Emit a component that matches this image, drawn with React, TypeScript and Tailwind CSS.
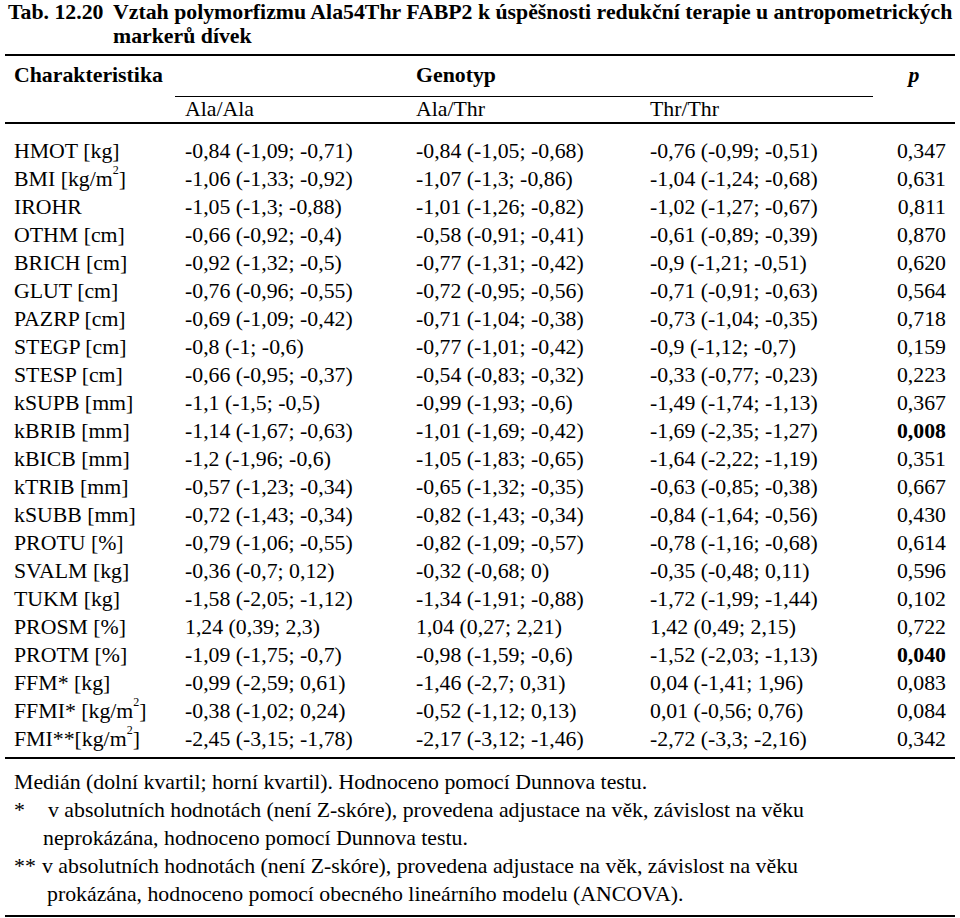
type Row = { label: React.ReactNode; a: string; b: string; c: string; p: string; bold?: boolean };

const Sq = () => <sup className="align-[6px] text-[12px] leading-none">2</sup>;

const rows: Row[] = [
  { label: "HMOT [kg]", a: "-0,84 (-1,09; -0,71)", b: "-0,84 (-1,05; -0,68)", c: "-0,76 (-0,99; -0,51)", p: "0,347" },
  { label: <>BMI [kg/m<Sq />]</>, a: "-1,06 (-1,33; -0,92)", b: "-1,07 (-1,3; -0,86)", c: "-1,04 (-1,24; -0,68)", p: "0,631" },
  { label: "IROHR", a: "-1,05 (-1,3; -0,88)", b: "-1,01 (-1,26; -0,82)", c: "-1,02 (-1,27; -0,67)", p: "0,811" },
  { label: "OTHM [cm]", a: "-0,66 (-0,92; -0,4)", b: "-0,58 (-0,91; -0,41)", c: "-0,61 (-0,89; -0,39)", p: "0,870" },
  { label: "BRICH [cm]", a: "-0,92 (-1,32; -0,5)", b: "-0,77 (-1,31; -0,42)", c: "-0,9 (-1,21; -0,51)", p: "0,620" },
  { label: "GLUT [cm]", a: "-0,76 (-0,96; -0,55)", b: "-0,72 (-0,95; -0,56)", c: "-0,71 (-0,91; -0,63)", p: "0,564" },
  { label: "PAZRP [cm]", a: "-0,69 (-1,09; -0,42)", b: "-0,71 (-1,04; -0,38)", c: "-0,73 (-1,04; -0,35)", p: "0,718" },
  { label: "STEGP [cm]", a: "-0,8 (-1; -0,6)", b: "-0,77 (-1,01; -0,42)", c: "-0,9 (-1,12; -0,7)", p: "0,159" },
  { label: "STESP [cm]", a: "-0,66 (-0,95; -0,37)", b: "-0,54 (-0,83; -0,32)", c: "-0,33 (-0,77; -0,23)", p: "0,223" },
  { label: "kSUPB [mm]", a: "-1,1 (-1,5; -0,5)", b: "-0,99 (-1,93; -0,6)", c: "-1,49 (-1,74; -1,13)", p: "0,367" },
  { label: "kBRIB [mm]", a: "-1,14 (-1,67; -0,63)", b: "-1,01 (-1,69; -0,42)", c: "-1,69 (-2,35; -1,27)", p: "0,008", bold: true },
  { label: "kBICB [mm]", a: "-1,2 (-1,96; -0,6)", b: "-1,05 (-1,83; -0,65)", c: "-1,64 (-2,22; -1,19)", p: "0,351" },
  { label: "kTRIB [mm]", a: "-0,57 (-1,23; -0,34)", b: "-0,65 (-1,32; -0,35)", c: "-0,63 (-0,85; -0,38)", p: "0,667" },
  { label: "kSUBB [mm]", a: "-0,72 (-1,43; -0,34)", b: "-0,82 (-1,43; -0,34)", c: "-0,84 (-1,64; -0,56)", p: "0,430" },
  { label: "PROTU [%]", a: "-0,79 (-1,06; -0,55)", b: "-0,82 (-1,09; -0,57)", c: "-0,78 (-1,16; -0,68)", p: "0,614" },
  { label: "SVALM [kg]", a: "-0,36 (-0,7; 0,12)", b: "-0,32 (-0,68; 0)", c: "-0,35 (-0,48; 0,11)", p: "0,596" },
  { label: "TUKM [kg]", a: "-1,58 (-2,05; -1,12)", b: "-1,34 (-1,91; -0,88)", c: "-1,72 (-1,99; -1,44)", p: "0,102" },
  { label: "PROSM [%]", a: "1,24 (0,39; 2,3)", b: "1,04 (0,27; 2,21)", c: "1,42 (0,49; 2,15)", p: "0,722" },
  { label: "PROTM [%]", a: "-1,09 (-1,75; -0,7)", b: "-0,98 (-1,59; -0,6)", c: "-1,52 (-2,03; -1,13)", p: "0,040", bold: true },
  { label: "FFM* [kg]", a: "-0,99 (-2,59; 0,61)", b: "-1,46 (-2,7; 0,31)", c: "0,04 (-1,41; 1,96)", p: "0,083" },
  { label: <>FFMI* [kg/m<Sq />]</>, a: "-0,38 (-1,02; 0,24)", b: "-0,52 (-1,12; 0,13)", c: "0,01 (-0,56; 0,76)", p: "0,084" },
  { label: <>FMI**[kg/m<Sq />]</>, a: "-2,45 (-3,15; -1,78)", b: "-2,17 (-3,12; -1,46)", c: "-2,72 (-3,3; -2,16)", p: "0,342" },
];

const cols = "grid grid-cols-[170px_231px_234px_233px_82px]";

export default function App() {
  return (
    <div className="min-h-screen bg-white text-black font-['Liberation_Serif',serif] text-[21.8px] leading-[28px]">
      <div className="flex pl-[8px] font-bold leading-[24px]">
        <div className="w-[105px] shrink-0 whitespace-nowrap">Tab. 12.20</div>
        <div className="whitespace-nowrap">
          <div>Vztah polymorfizmu Ala54Thr FABP2 k úspěšnosti redukční terapie u antropometrických</div>
          <div>markerů dívek</div>
        </div>
      </div>

      <div className="mx-[5px] mt-[6px] w-[950px] border-t-2 border-black">
        {/* header */}
        <div className={cols}>
          <div className="col-start-1 row-span-2 pl-[9px] pt-[5px] font-bold">Charakteristika</div>
          <div className="col-span-3 col-start-2 grid grid-cols-[231px_234px_233px] border-b border-black">
            <div />
            <div className="pl-[10px] pt-[5px] pb-[7px] font-bold">Genotyp</div>
            <div />
          </div>
          <div className="col-start-5 row-span-2 pt-[5px] text-center font-bold italic">p</div>
          <div className="col-start-2 pl-[10px] leading-[25px]">Ala/Ala</div>
          <div className="pl-[10px] leading-[25px]">Ala/Thr</div>
          <div className="pl-[10px] leading-[25px]">Thr/Thr</div>
        </div>

        {/* body */}
        <div className="border-t-2 border-black pt-[13px] pb-[4px]">
          {rows.map((r, i) => (
            <div key={i} className={cols + " h-[28px]"}>
              <div className="pl-[9px] whitespace-nowrap">{r.label}</div>
              <div className="pl-[10px] whitespace-nowrap">{r.a}</div>
              <div className="pl-[10px] whitespace-nowrap">{r.b}</div>
              <div className="pl-[10px] whitespace-nowrap">{r.c}</div>
              <div className={"pr-[9px] text-right " + (r.bold ? "font-bold" : "")}>{r.p}</div>
            </div>
          ))}
        </div>

        {/* notes */}
        <div className="border-t-2 border-b-2 border-black pt-[9px] pb-[7px] pl-[9px] whitespace-nowrap">
          <div>Medián (dolní kvartil; horní kvartil). Hodnoceno pomocí Dunnova testu.</div>
          <div className="flex">
            <span className="w-[34px] shrink-0">*</span>
            <span>v absolutních hodnotách (není Z-skóre), provedena adjustace na věk, závislost na věku</span>
          </div>
          <div className="pl-[29px]">neprokázána, hodnoceno pomocí Dunnova testu.</div>
          <div className="flex">
            <span className="w-[28px] shrink-0">**</span>
            <span>v absolutních hodnotách (není Z-skóre), provedena adjustace na věk, závislost na věku</span>
          </div>
          <div className="pl-[33px]">prokázána, hodnoceno pomocí obecného lineárního modelu (ANCOVA).</div>
        </div>
      </div>
    </div>
  );
}
